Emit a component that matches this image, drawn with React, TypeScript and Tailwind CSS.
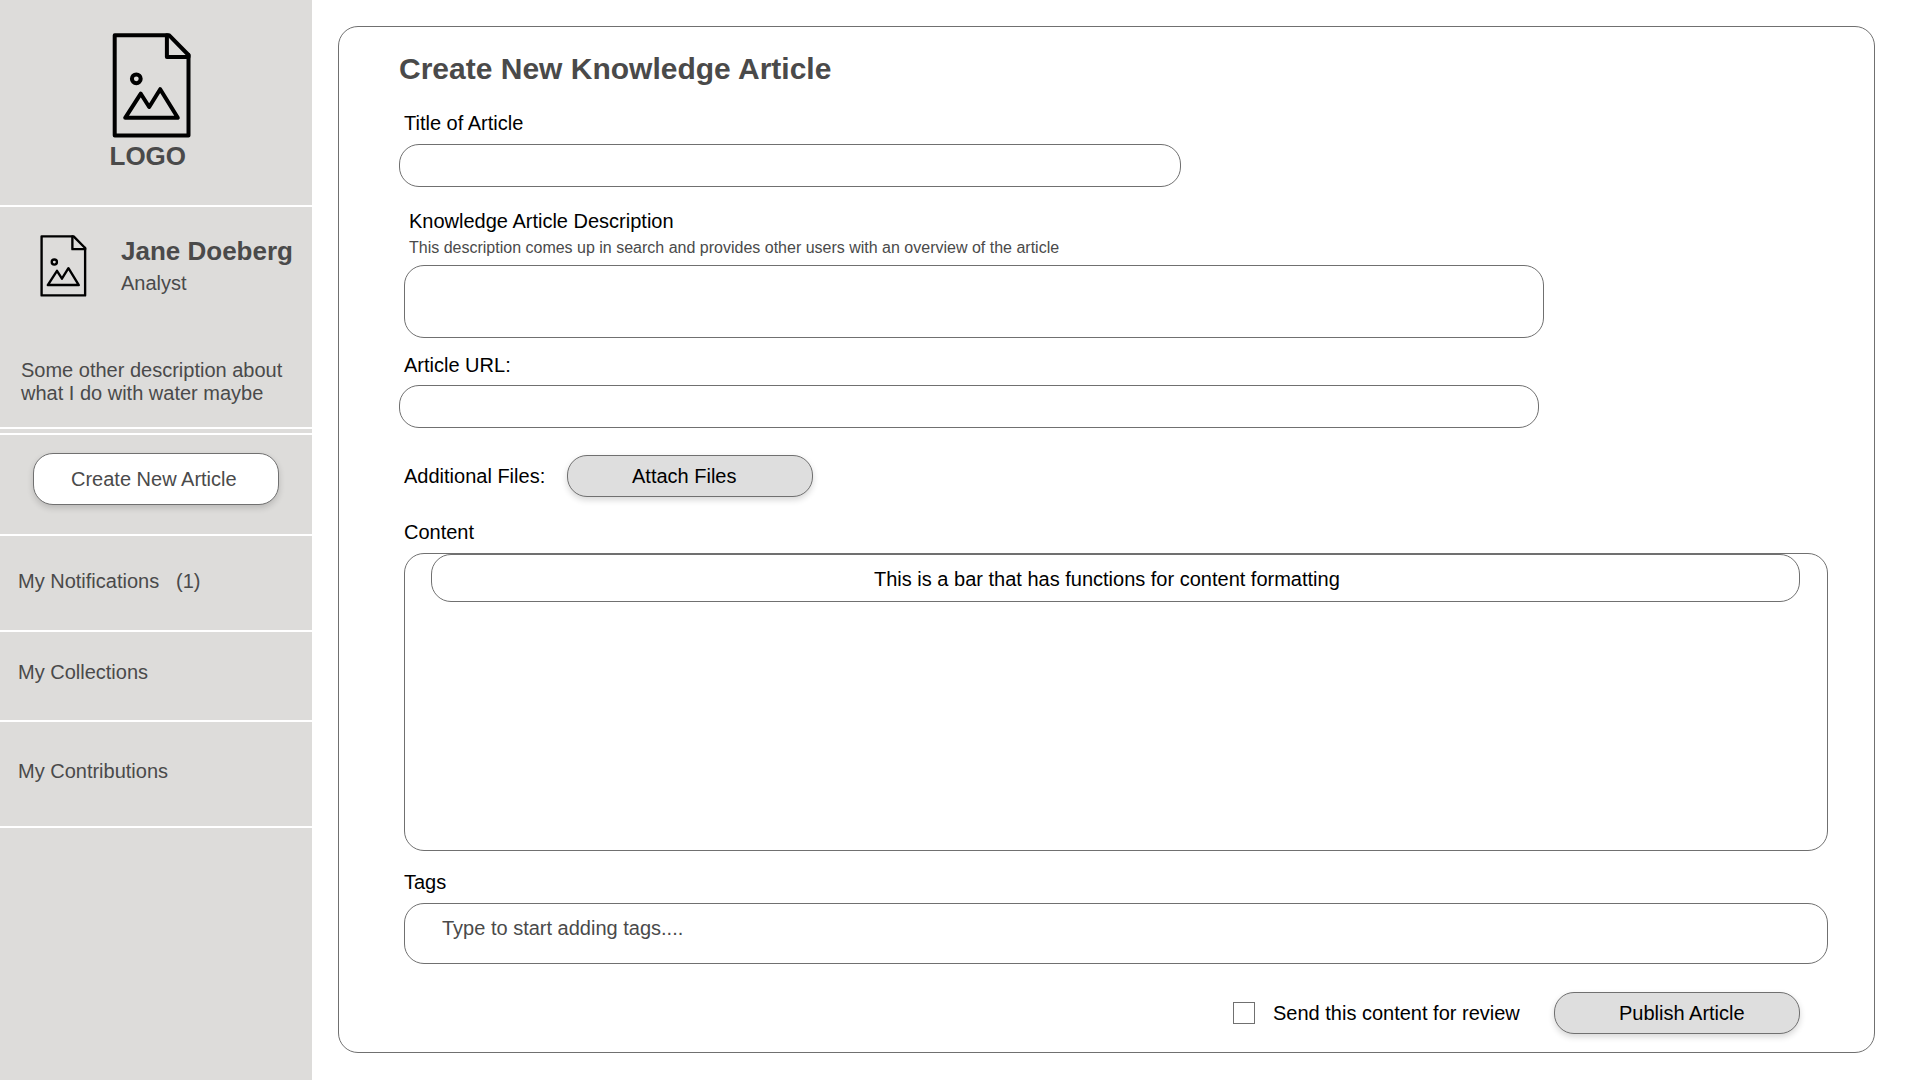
import type { ReactNode } from "react";

function FileImageIcon({ className }: { className: string }) {
  return (
    <svg
      className={className}
      viewBox="0 0 79 105"
      fill="none"
      stroke="#000"
      strokeWidth="4"
      strokeLinejoin="round"
      strokeLinecap="round"
    >
      <path d="M2.7 2.2H57L76.5 22v80.4H2.7z" />
      <path d="M54.9 2.2V24H76.5V22" />
      <circle cx="24.3" cy="45.8" r="4.4" />
      <path d="M13.2 84.8 28.8 60.7 37.2 74 48.2 56.2 65.8 84.8z" />
    </svg>
  );
}

function PillButton({ className, children }: { className: string; children: ReactNode }) {
  return (
    <button
      className={`flex w-[246px] items-center rounded-[20px] border border-[#707070] text-left shadow-[0_3px_6px_rgba(0,0,0,0.16)] ${className}`}
    >
      {children}
    </button>
  );
}

function Sidebar() {
  return (
    <aside className="flex h-full w-[312px] shrink-0 flex-col bg-[#dddcda] text-[#4a4a4a]">
      <div className="h-[207px] border-b-2 border-white pt-[33px]">
        <FileImageIcon className="ml-[112px] h-[105px] w-[79px]" />
        <div className="mt-[3px] ml-[109.5px] text-[26px] leading-[30px] font-bold">LOGO</div>
      </div>
      <div className="h-[222px] border-b-2 border-white pt-[28px]">
        <div className="flex">
          <FileImageIcon className="ml-[40px] h-[62px] w-[46.6px]" />
          <div className="mt-px ml-[34.4px]">
            <div className="text-[26px] leading-[30px] font-bold whitespace-nowrap">Jane Doeberg</div>
            <div className="mt-[6px]">Analyst</div>
          </div>
        </div>
        <p className="mt-[62px] ml-[21px] w-[280px]">
          Some other description about
          <br />
          what I do with water maybe
        </p>
      </div>
      <div className="h-[6px] border-b-2 border-white" />
      <div className="h-[101px] border-b-2 border-white pt-[18px] pl-[33px]">
        <PillButton className="h-[52px] bg-white pl-[37px]">Create New Article</PillButton>
      </div>
      <nav>
        <a className="flex h-[96px] border-b-2 border-white pt-[34px] pl-[18px]">
          <span className="w-[158px]">My Notifications</span>
          <span>(1)</span>
        </a>
        <a className="block h-[90px] border-b-2 border-white pt-[29px] pl-[18px]">My Collections</a>
        <a className="block h-[106px] border-b-2 border-white pt-[38px] pl-[18px]">My Contributions</a>
      </nav>
    </aside>
  );
}

export default function App() {
  return (
    <div className="flex h-[1080px] w-[1920px] overflow-hidden bg-white font-['Liberation_Sans',Arial,sans-serif] text-[20px] leading-[23px] text-black">
      <Sidebar />
      <main className="mt-[26px] ml-[26px] h-[1027px] w-[1537px] rounded-[20px] border border-[#707070] pt-[25px] pl-[60px]">
        <h1 className="text-[30px] leading-[34px] font-bold text-[#4a4a4a]">Create New Knowledge Article</h1>

        <label className="mt-[26px] ml-[5px] block">Title of Article</label>
        <input className="mt-[9px] block h-[43px] w-[782px] rounded-[20px] border border-[#707070] px-5" />

        <label className="mt-[23px] ml-[10px] block">Knowledge Article Description</label>
        <p className="mt-[6px] ml-[10px] text-[16px] leading-[18px] text-[#4a4a4a]">
          This description comes up in search and provides other users with an overview of the article
        </p>
        <textarea className="mt-[8px] ml-[5px] block h-[73px] w-[1140px] resize-none rounded-[20px] border border-[#707070] px-5" />

        <label className="mt-[16px] ml-[5px] block">Article URL:</label>
        <input className="mt-[8px] block h-[43px] w-[1140px] rounded-[20px] border border-[#707070] px-5" />

        <div className="mt-[27px] ml-[5px] flex items-center">
          <span className="w-[163px]">Additional Files:</span>
          <PillButton className="h-[42px] bg-[#dedede] pl-[64px]">Attach Files</PillButton>
        </div>

        <label className="mt-[24px] ml-[5px] block">Content</label>
        <div className="mt-[9px] ml-[5px] h-[298px] w-[1424px] rounded-[20px] border border-[#707070] pl-[26px]">
          <div className="h-[48px] w-[1369px] rounded-[20px] border border-[#707070] pt-[13px] pl-[442px]">
            This is a bar that has functions for content formatting
          </div>
        </div>

        <label className="mt-[20px] ml-[5px] block">Tags</label>
        <div className="mt-[9px] ml-[5px] h-[61px] w-[1424px] rounded-[20px] border border-[#707070] pt-[13px] pl-[37px] text-[#4a4a4a]">
          Type to start adding tags....
        </div>

        <div className="mt-[28px] flex w-[1401px] items-center justify-end">
          <span className="size-[22px] border border-[#707070] bg-white" />
          <span className="ml-[18px] w-[281px]">Send this content for review</span>
          <PillButton className="h-[42px] bg-[#dedede] pl-[64px]">Publish Article</PillButton>
        </div>
      </main>
    </div>
  );
}
